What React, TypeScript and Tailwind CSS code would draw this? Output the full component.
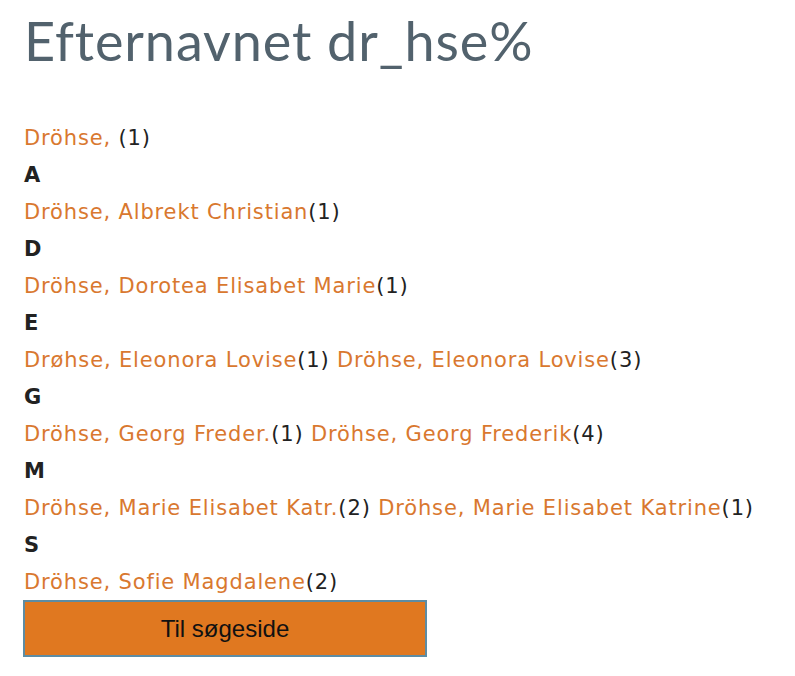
import React from "react";

type Entry = { name: string; count: number };
type Group = { letter?: string; entries: Entry[] };

const groups: Group[] = [
  { entries: [{ name: "Dröhse, ", count: 1 }] },
  { letter: "A", entries: [{ name: "Dröhse, Albrekt Christian", count: 1 }] },
  { letter: "D", entries: [{ name: "Dröhse, Dorotea Elisabet Marie", count: 1 }] },
  {
    letter: "E",
    entries: [
      { name: "Drøhse, Eleonora Lovise", count: 1 },
      { name: "Dröhse, Eleonora Lovise", count: 3 },
    ],
  },
  {
    letter: "G",
    entries: [
      { name: "Dröhse, Georg Freder.", count: 1 },
      { name: "Dröhse, Georg Frederik", count: 4 },
    ],
  },
  {
    letter: "M",
    entries: [
      { name: "Dröhse, Marie Elisabet Katr.", count: 2 },
      { name: "Dröhse, Marie Elisabet Katrine", count: 1 },
    ],
  },
  { letter: "S", entries: [{ name: "Dröhse, Sofie Magdalene", count: 2 }] },
];

const App: React.FC = () => {
  return (
    <div className="min-h-screen bg-white px-6 pt-[11px]">
      <h1 className="text-[54px] leading-[60px] tracking-[0.9px] text-[#52626d] font-['Lato',sans-serif] font-normal">
        Efternavnet dr_hse%
      </h1>

      <div className="mt-[49px] flex flex-col font-['DejaVu_Sans',sans-serif] text-[21px] tracking-[0.85px] text-[#222]">
        {groups.map((g, i) => (
          <React.Fragment key={i}>
            {g.letter && <div className="h-[37px] leading-[37px] font-bold">{g.letter}</div>}
            <div className="h-[37px] leading-[37px] whitespace-nowrap">
              {g.entries.map((e, j) => (
                <span key={j}>
                  {j > 0 && " "}
                  <a href="#" className="text-[#d9782f]">
                    {e.name}
                  </a>
                  ({e.count})
                </span>
              ))}
            </div>
          </React.Fragment>
        ))}
      </div>

      <button className="-ml-px -mt-px w-[404px] h-[57px] bg-[#e07820] border-2 border-[#5d8ca3] text-[24px] text-[#111] font-['Liberation_Sans',sans-serif]">
        Til søgeside
      </button>
    </div>
  );
};

export default App;
